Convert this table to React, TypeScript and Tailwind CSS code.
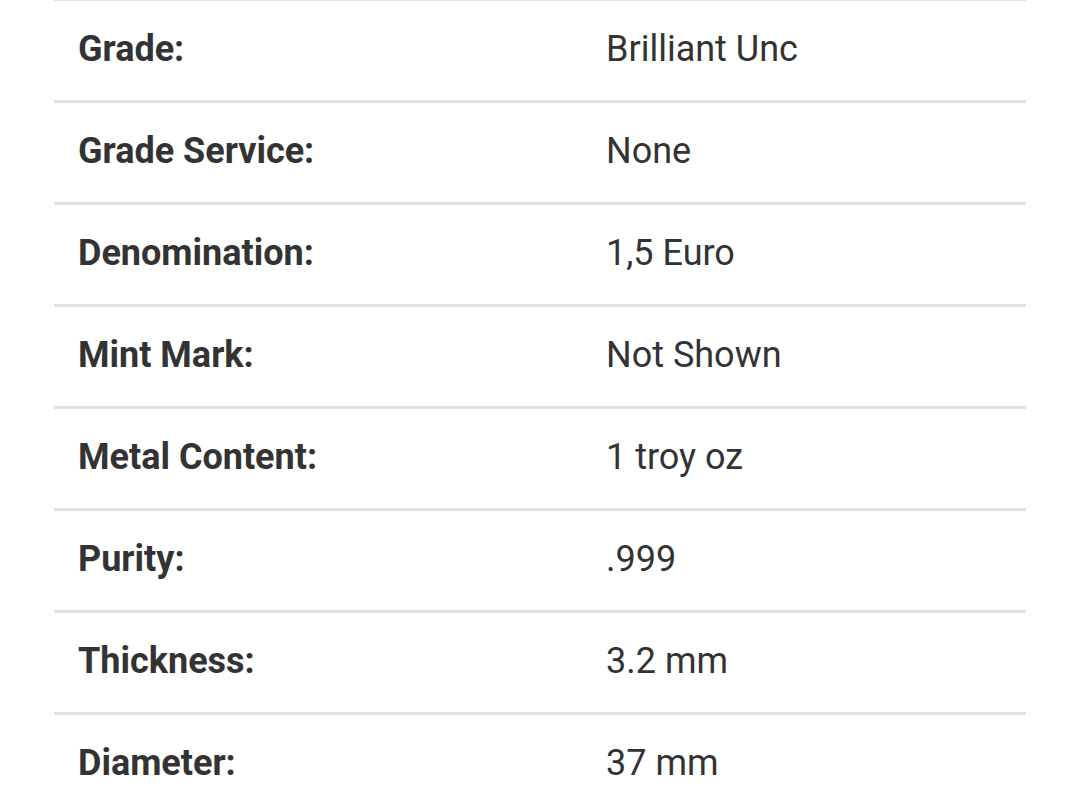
import React from "react";

const rows: [string, string][] = [
  ["Grade:", "Brilliant Unc"],
  ["Grade Service:", "None"],
  ["Denomination:", "1,5 Euro"],
  ["Mint Mark:", "Not Shown"],
  ["Metal Content:", "1 troy oz"],
  ["Purity:", ".999"],
  ["Thickness:", "3.2 mm"],
  ["Diameter:", "37 mm"],
];

export default function App() {
  return (
    <div className="w-[1080px] h-[809px] overflow-hidden bg-white" style={{ fontFamily: "Roboto, 'Noto Sans', sans-serif" }}>
      <div className="ml-[54px] w-[972px] border-t border-[#e0e0e0]">
        {rows.map(([k, v]) => (
          <div key={k} className="grid grid-cols-[552px_1fr] h-[102px] pb-[4px] border-b-[3px] border-[#e0e0e0] items-center text-[36px] text-[#333333]">
            <div className="pl-[24px] font-bold">{k}</div>
            <div>{v}</div>
          </div>
        ))}
      </div>
    </div>
  );
}
